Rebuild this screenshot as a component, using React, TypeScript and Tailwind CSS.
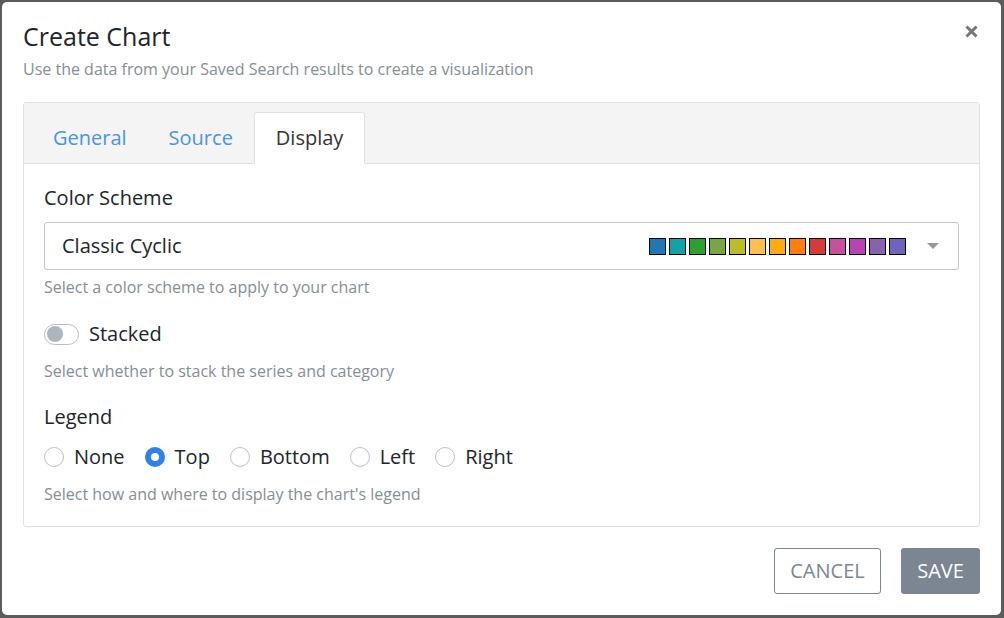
import React from "react";

const swatches = [
  "#1f77b4",
  "#12a2a8",
  "#2ca030",
  "#78a641",
  "#bcbd22",
  "#ffbf50",
  "#ffaa0e",
  "#ff7f0e",
  "#d63a3a",
  "#c7519c",
  "#ba43b4",
  "#8a60b0",
  "#6f63bb",
];

function Radio({ label, checked }: { label: string; checked?: boolean }) {
  return (
    <label className="flex items-center gap-[10px]">
      {checked ? (
        <span className="w-[20px] h-[20px] rounded-full bg-[#2f7ff0] flex items-center justify-center">
          <span className="w-[8px] h-[8px] rounded-full bg-white" />
        </span>
      ) : (
        <span className="w-[20px] h-[20px] rounded-full border border-[#bcc2c8] bg-white" />
      )}
      <span className="text-[20px] leading-[24px] text-[#212529]">{label}</span>
    </label>
  );
}

export default function App() {
  return (
    <div
      className="w-[1004px] h-[618px] bg-[#5c5c5c] pt-[2px] pl-[2px]"
      style={{ fontFamily: '"Open Sans", "Noto Sans", sans-serif' }}
    >
      <div className="w-[999px] h-[613px] bg-white rounded-[5px] px-[21px] pt-[18px] flex flex-col">
        <div className="flex items-start justify-between">
          <h1 className="text-[25px] leading-[32px] text-[#212529]">Create Chart</h1>
          <button className="mt-[3px] p-[2px]">
            <svg width="13" height="13" viewBox="0 0 13 13">
              <path d="M1.5 1.5 L11.5 11.5 M11.5 1.5 L1.5 11.5" stroke="#777" strokeWidth="3" strokeLinecap="butt" />
            </svg>
          </button>
        </div>
        <p className="mt-[6px] text-[16px] leading-[22px] text-[#868e96]">
          Use the data from your Saved Search results to create a visualization
        </p>

        <div className="mt-[22px] border border-[#dee2e6] rounded-[3px]">
          <div className="bg-[#f4f4f4] border-b border-[#dee2e6] pt-[9px] pl-[8px] flex items-end h-[61px] rounded-t-[3px]">
            <div className="px-[21px] h-[51px] flex items-center text-[20px] text-[#4a95dc]">General</div>
            <div className="px-[21px] h-[51px] flex items-center text-[20px] text-[#4a95dc]">Source</div>
            <div className="px-[21px] h-[52px] -mb-px flex items-center text-[20px] text-[#333] bg-white border border-[#dee2e6] border-b-white rounded-t-[3px]">
              Display
            </div>
          </div>

          <div className="px-[20px] pt-[22px] pb-[22px]">
            <div className="text-[20px] leading-[24px] text-[#212529]">Color Scheme</div>
            <div className="mt-[12px] h-[48px] border border-[#bfc5cc] rounded-[3px] flex items-center pl-[17px] pr-[19px]">
              <span className="text-[20px] text-[#212529] flex-1">Classic Cyclic</span>
              <div className="flex gap-[3px]">
                {swatches.map((c) => (
                  <span
                    key={c}
                    className="w-[17px] h-[17px] border border-black"
                    style={{ backgroundColor: c }}
                  />
                ))}
              </div>
              <svg className="ml-[21px]" width="12" height="6" viewBox="0 0 12 6">
                <path d="M0 0 L12 0 L6 6 Z" fill="#999" />
              </svg>
            </div>
            <p className="mt-[7px] text-[16px] leading-[20px] text-[#868e96]">
              Select a color scheme to apply to your chart
            </p>

            <div className="mt-[25px] flex items-center gap-[10px]">
              <span className="w-[35px] h-[21px] rounded-full border border-[#b7bdc3] flex items-center pl-[2px]">
                <span className="w-[16px] h-[16px] rounded-full bg-[#adb5bd]" />
              </span>
              <span className="text-[20px] leading-[24px] text-[#212529]">Stacked</span>
            </div>
            <p className="mt-[15px] text-[16px] leading-[20px] text-[#868e96]">
              Select whether to stack the series and category
            </p>

            <div className="mt-[24px] text-[20px] leading-[24px] text-[#212529]">Legend</div>
            <div className="mt-[16px] flex items-center gap-[20px]">
              <Radio label="None" />
              <Radio label="Top" checked />
              <Radio label="Bottom" />
              <Radio label="Left" />
              <Radio label="Right" />
            </div>
            <p className="mt-[15px] text-[16px] leading-[20px] text-[#868e96]">
              Select how and where to display the chart's legend
            </p>
          </div>
        </div>

        <div className="mt-[21px] flex justify-end gap-[20px]">
          <button className="w-[107px] h-[46px] border border-[#7b8793] rounded-[3px] text-[20px] text-[#7b8793] bg-white">
            CANCEL
          </button>
          <button className="w-[79px] h-[46px] rounded-[3px] bg-[#7b8692] text-[20px] text-white">
            SAVE
          </button>
        </div>
      </div>
    </div>
  );
}
